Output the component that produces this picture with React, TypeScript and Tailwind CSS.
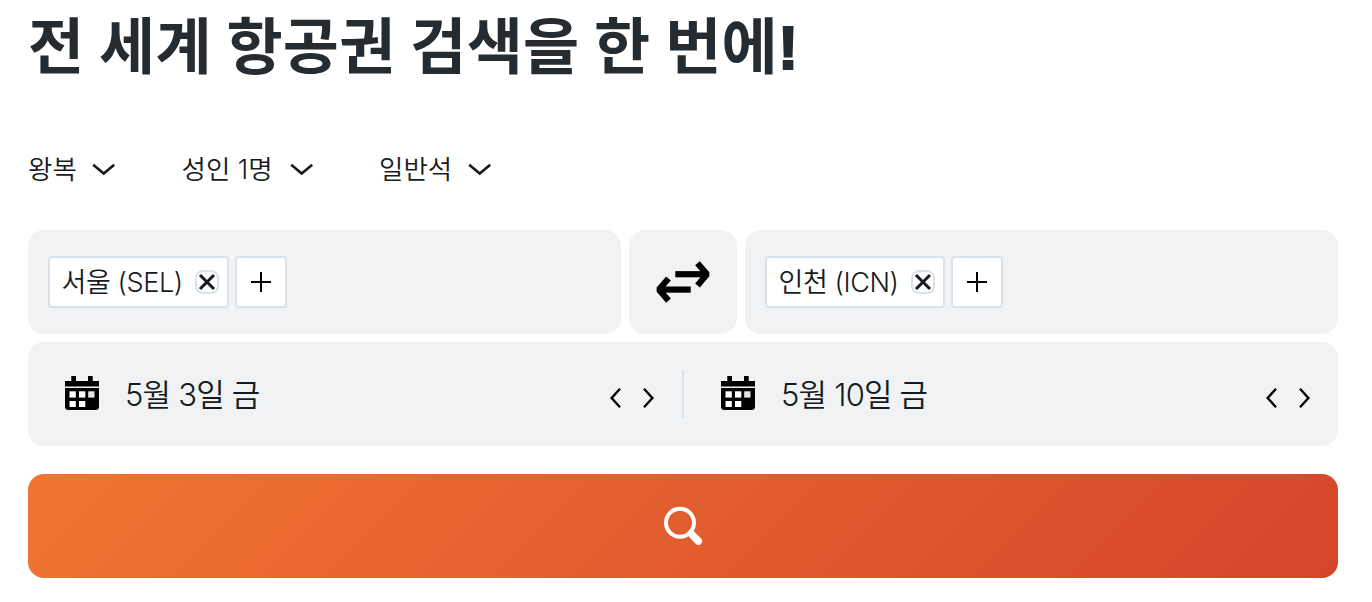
const FILTERS = [
  { label: "왕복", width: "w-[153.5px]", labelWidth: "w-[64px]" },
  { label: "성인 1명", width: "w-[197.5px]", labelWidth: "w-[108.5px]" },
  { label: "일반석", width: "w-[120px]", labelWidth: "w-[88.5px]" },
];

function ChevronDown() {
  return (
    <svg width="24" height="14" viewBox="0 0 24 14" fill="none" className="mt-px">
      <path d="M1.2 1.8 L11.7 10.6 L22.2 1.8" stroke="#161b21" strokeWidth="2.6" />
    </svg>
  );
}

function SwapIcon() {
  return (
    <svg width="54" height="42" viewBox="0 0 54 42" fill="none" stroke="#000" strokeWidth="6.2">
      <path d="M19.3 13.2 H50" />
      <path d="M41.5 2.2 L51 13.2 L41.5 24.4" strokeLinejoin="bevel" />
      <path d="M4 28.6 H34.7" />
      <path d="M12.5 17.4 L3 28.6 L12.5 39.6" strokeLinejoin="bevel" />
    </svg>
  );
}

function CalendarIcon() {
  return (
    <svg width="34" height="34" viewBox="0 0 34 34" className="-mt-0.5 shrink-0">
      <path d="M6.3 0h4.7v5h12V0h4.7v5H34v5.5H0V5h6.3z" />
      <path d="M0 12h34v18.5a3.5 3.5 0 0 1-3.5 3.5h-27A3.5 3.5 0 0 1 0 30.5z" />
      <g fill="#fff">
        <rect x="4.5" y="15.3" width="6.3" height="6.3" />
        <rect x="14" y="15.3" width="6.3" height="6.3" />
        <rect x="4.5" y="25" width="6.3" height="6" />
        <rect x="14" y="25" width="6.3" height="6" />
      </g>
      <rect x="23.2" y="15.3" width="6.3" height="6.3" fill="#e4e5e6" />
    </svg>
  );
}

function DayArrow({ next }: { next?: boolean }) {
  return (
    <svg width="11" height="20" viewBox="0 0 11 20" fill="none">
      <path
        d={next ? "M1 0.8 L9.4 10 L1 19.2" : "M10 0.8 L1.6 10 L10 19.2"}
        stroke="#000"
        strokeWidth="2.4"
      />
    </svg>
  );
}

function AirportField({ name, chipWidth }: { name: string; chipWidth: string }) {
  return (
    <div className="flex flex-1 items-center gap-1.5 rounded-2xl bg-[#f1f2f4] px-5">
      <div
        className={`${chipWidth} flex h-[52px] items-center justify-between rounded border-2 border-[#d9e2e8] bg-white pr-2 pl-[11.5px]`}
      >
        <span className="mt-0.5 text-[27px] leading-[46px] font-[350] tracking-[-0.4px] whitespace-nowrap">
          {name}
        </span>
        <button
          type="button"
          aria-label="삭제"
          className="flex size-6 shrink-0 items-center justify-center rounded-lg border-2 border-[#d9e2e8]"
        >
          <svg width="18" height="18" viewBox="0 0 18 18" className="shrink-0" fill="none">
            <path d="M2 2 L16 16 M16 2 L2 16" stroke="#161b21" strokeWidth="3" />
          </svg>
        </button>
      </div>
      <button
        type="button"
        aria-label="추가"
        className="flex size-[52px] items-center justify-center rounded border-2 border-[#d9e2e8] bg-white"
      >
        <svg width="20" height="20" viewBox="0 0 20 20">
          <path d="M10 0 V20 M0 10 H20" stroke="#000" strokeWidth="2" />
        </svg>
      </button>
    </div>
  );
}

function DateField({ date }: { date: string }) {
  return (
    <div className="flex flex-1 items-center">
      <CalendarIcon />
      <span className="mt-0.5 ml-[26px] text-[31px] leading-[48px] font-[350] tracking-[-0.8px] whitespace-nowrap">
        {date}
      </span>
      <div className="mt-2 ml-auto flex gap-[22px]">
        <DayArrow />
        <DayArrow next />
      </div>
    </div>
  );
}

export default function App() {
  return (
    <div className="h-[602px] w-[1372px] overflow-hidden bg-white pr-[34px] pl-7 font-['Inter','Noto_Sans_CJK_KR',sans-serif] text-[#161b21]">
      <h1 className="h-[140px] text-[61px] leading-[94px] font-bold tracking-[0.25px] whitespace-nowrap text-[#242b31]">
        전 세계 항공권 검색을 한 번에
        <span className="font-['Liberation_Sans',sans-serif] [-webkit-text-stroke:2px_#242b31]">!</span>
      </h1>

      <div className="flex h-[58px] items-center">
        {FILTERS.map(({ label, width, labelWidth }) => (
          <button key={label} type="button" className={`${width} flex items-center`}>
            <span
              className={`${labelWidth} text-left text-[26.5px] leading-[40px] font-[350] whitespace-nowrap`}
            >
              {label}
            </span>
            <ChevronDown />
          </button>
        ))}
      </div>

      <div className="mt-8 flex h-[104px] gap-2">
        <AirportField name="서울 (SEL)" chipWidth="w-[181px]" />
        <button
          type="button"
          aria-label="출발지 도착지 변경"
          className="flex w-[108px] items-center justify-center rounded-2xl bg-[#f1f2f4]"
        >
          <SwapIcon />
        </button>
        <AirportField name="인천 (ICN)" chipWidth="w-[180px]" />
      </div>

      <div className="mt-2 flex h-[104px] items-center rounded-2xl bg-[#f1f2f4] pr-7 pl-[37px]">
        <DateField date="5월 3일 금" />
        <div className="mr-[37px] ml-7 h-12 w-0.5 bg-[#d9e2e8]" />
        <DateField date="5월 10일 금" />
      </div>

      <button
        type="button"
        aria-label="검색"
        className="mt-7 flex h-[104px] w-full items-center justify-center rounded-2xl bg-[linear-gradient(135deg,#f07532,#d5452b)]"
      >
        <svg width="40" height="40" viewBox="0 0 40 40" fill="none" stroke="#fff">
          <circle cx="17" cy="16.7" r="14" strokeWidth="4" />
          <path d="M28 27.5 L35.3 35.2" strokeWidth="7.5" strokeLinecap="round" />
        </svg>
      </button>
    </div>
  );
}
